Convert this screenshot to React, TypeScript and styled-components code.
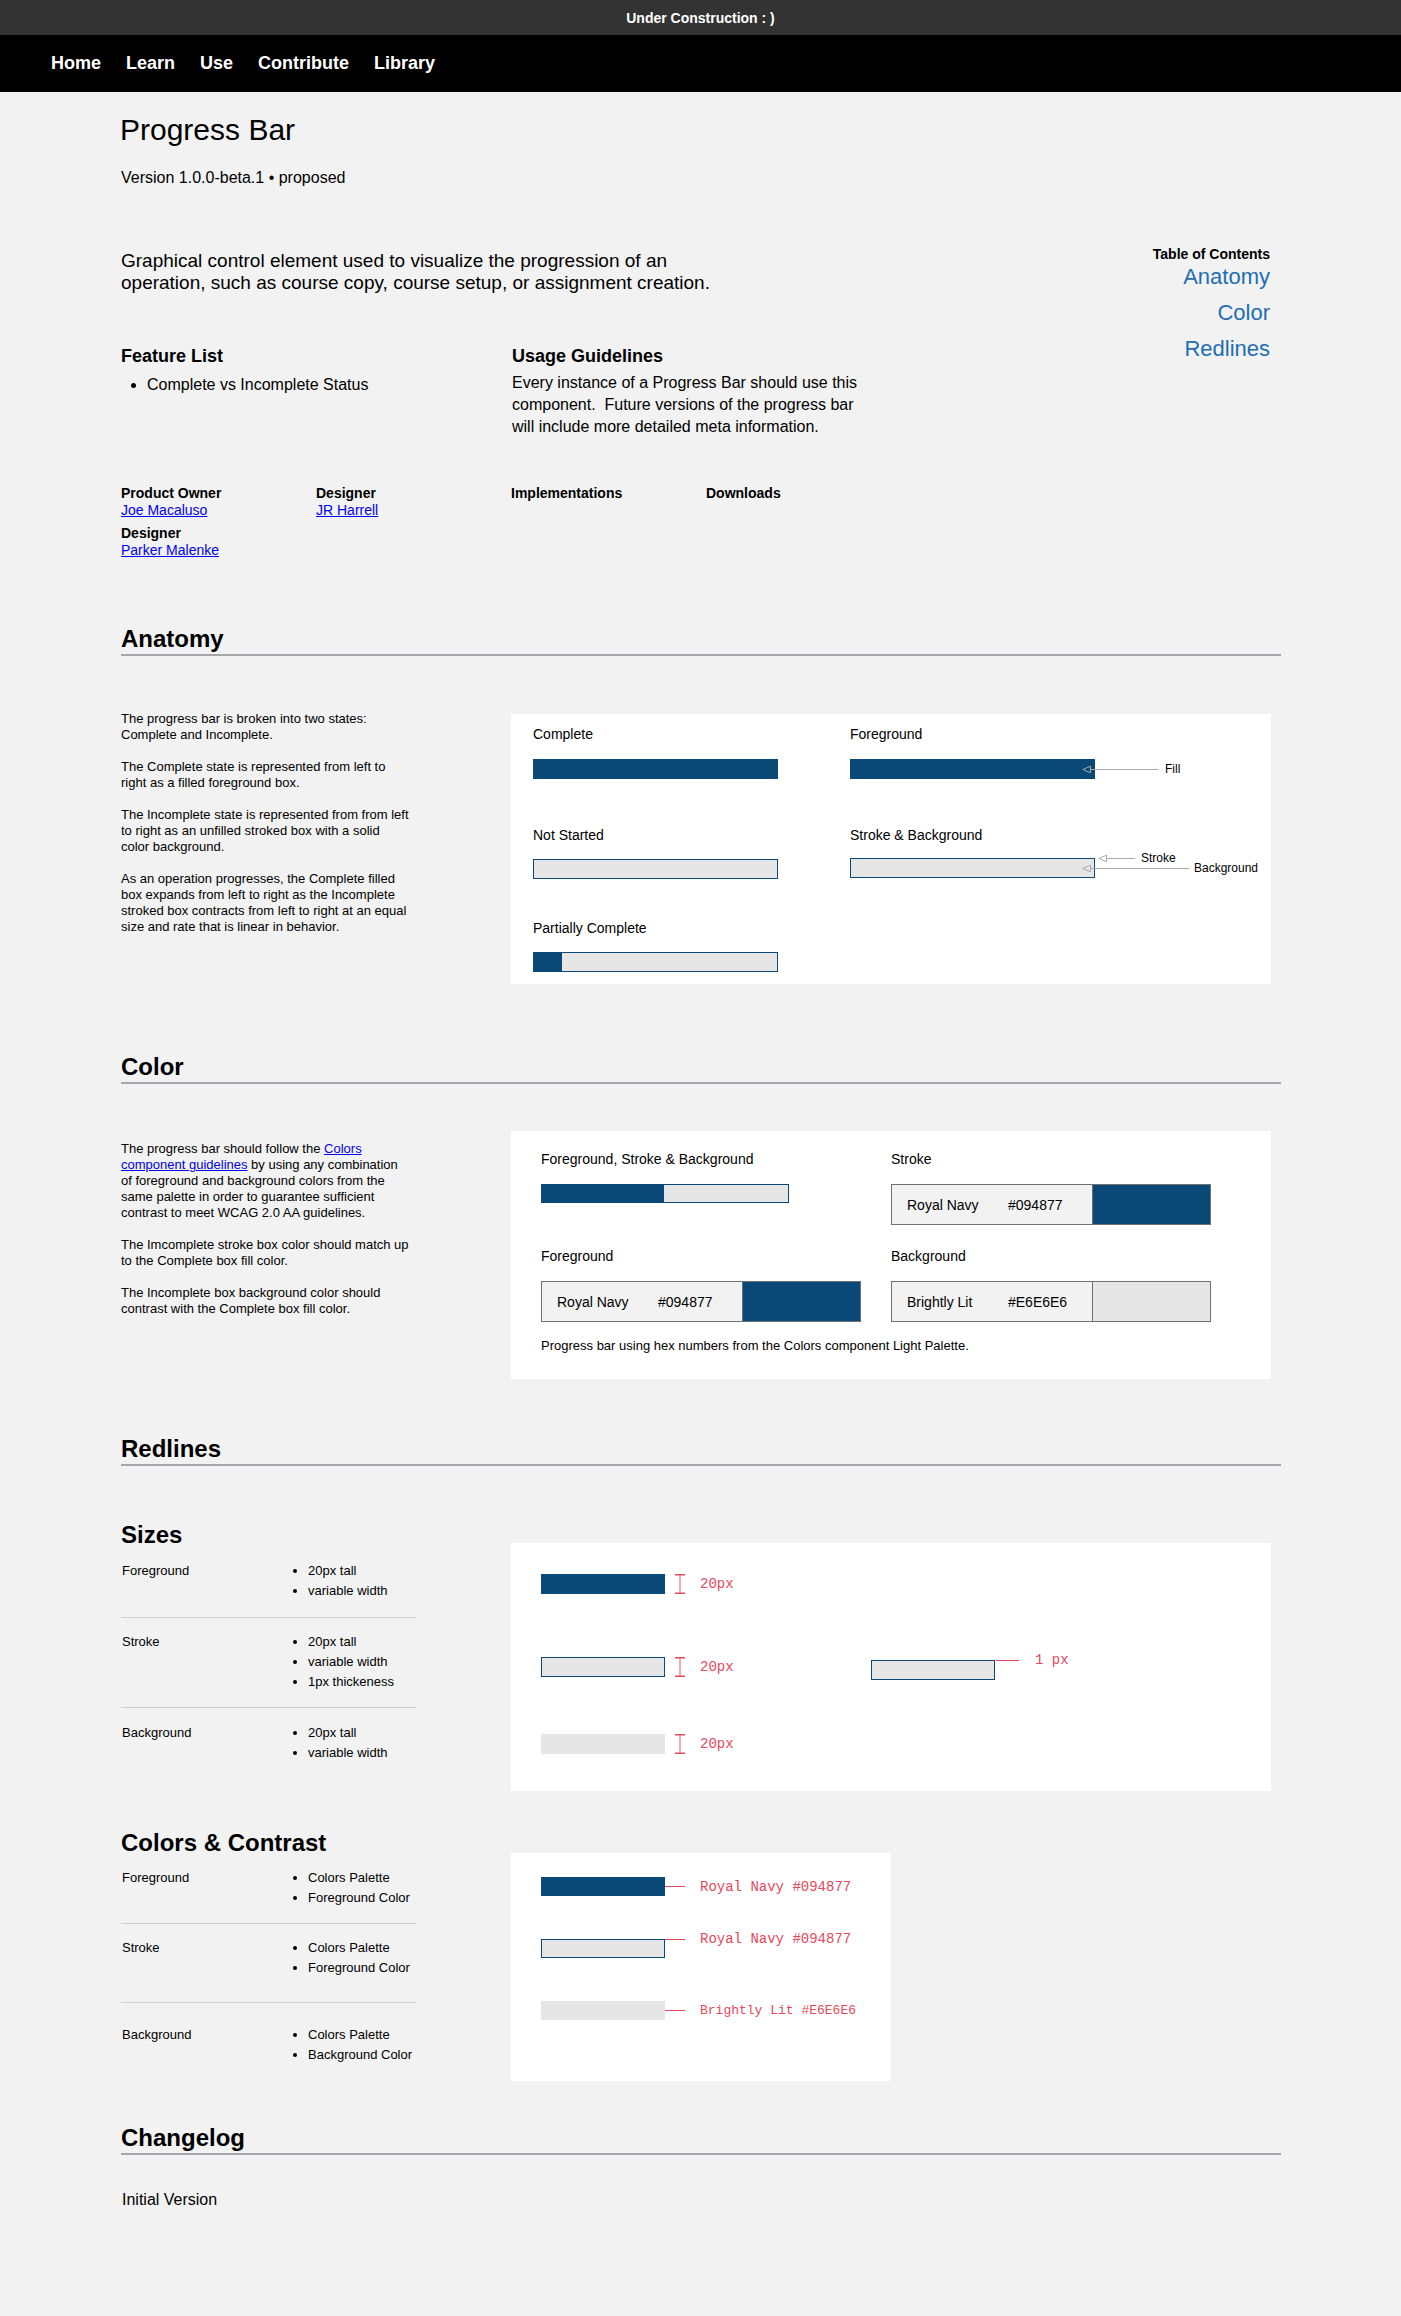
import styled, { createGlobalStyle } from "styled-components";

const NAVY = "#094877";
const LIT = "#e6e6e6";
const RED = "#e5485a";
const MONO = `"Liberation Mono", "Courier New", monospace`;

const GlobalStyle = createGlobalStyle`
  * {
    box-sizing: border-box;
  }

  body {
    margin: 0;
    background: #f2f2f2;
    color: #000;
    font-family: "Liberation Sans", Arial, Helvetica, sans-serif;
  }
`;

type BarKind = "fill" | "stroke" | "plain";

const Banner = styled.div`
  display: flex;
  align-items: center;
  justify-content: center;
  height: 35px;
  background: #333;
  color: #fff;
  font-size: 14px;
  font-weight: 700;
`;

const Nav = styled.nav`
  display: flex;
  align-items: center;
  gap: 25px;
  height: 57px;
  padding-left: 51px;
  background: #000;
`;

const NavLink = styled.a`
  color: #fff;
  font-size: 18px;
  font-weight: 700;
  text-decoration: none;
`;

const Main = styled.main`
  width: 1160px;
  margin-left: 121px;
  padding-bottom: 100px;
`;

const Title = styled.h1`
  margin: 20px 0 0 -1px;
  font-size: 30px;
  font-weight: 400;
  line-height: 36px;
`;

const Version = styled.p`
  margin: 20px 0 0;
  font-size: 16px;
  line-height: 20px;
`;

const Intro = styled.div`
  display: flex;
  justify-content: space-between;
  margin-top: 62px;
`;

const IntroMain = styled.div`
  display: flex;
  flex-direction: column;
`;

const Description = styled.p`
  max-width: 680px;
  margin: 0;
  font-size: 19px;
  line-height: 22px;
`;

const InfoGrid = styled.div`
  display: grid;
  grid-template-columns: 391px 360px;
  margin-top: 52px;
`;

const InfoHeading = styled.h3`
  margin: 0;
  font-size: 18px;
  font-weight: 700;
  line-height: 20px;
`;

const FeatureList = styled.ul`
  margin: 8px 0 0;
  padding-left: 26px;
  font-size: 16px;
  line-height: 22px;
`;

const InfoText = styled.p`
  margin: 6px 0 0;
  font-size: 16px;
  line-height: 22px;
`;

const MetaGrid = styled.div`
  display: grid;
  grid-template-columns: repeat(4, 195px);
  row-gap: 6px;
  margin-top: 47px;
  font-size: 14px;
  line-height: 17px;
`;

const MetaCell = styled.div`
  display: flex;
  flex-direction: column;
  min-height: 34px;
`;

const MetaLabel = styled.span`
  font-weight: 700;
`;

const PersonLink = styled.a`
  color: #0000ee;
  text-decoration: underline;
`;

const Toc = styled.aside`
  display: flex;
  flex-direction: column;
  align-items: flex-end;
  margin: -4px 11px 0 0;
`;

const TocTitle = styled.span`
  margin-bottom: -3px;
  font-size: 14px;
  font-weight: 700;
  line-height: 16px;
`;

const TocLink = styled.a`
  color: #1f6eb3;
  font-size: 22px;
  line-height: 36px;
  text-decoration: none;
`;

const SectionHeading = styled.h2<{ $top: number }>`
  margin: ${({ $top }) => $top}px 0 0;
  padding-bottom: 1px;
  border-bottom: 2px solid #a6a6ab;
  font-size: 24px;
  font-weight: 700;
  line-height: 28px;
`;

const SectionBody = styled.div<{ $top: number }>`
  display: grid;
  grid-template-columns: 390px 760px;
  align-items: start;
  margin-top: ${({ $top }) => $top}px;
`;

const Notes = styled.div<{ $offset: number }>`
  width: 300px;
  margin-top: ${({ $offset }) => $offset}px;
  font-size: 13px;
  line-height: 16px;

  p {
    margin: 0 0 16px;
  }
`;

const InlineLink = styled.a`
  color: #0000ee;
  text-decoration: underline;
`;

const Panel = styled.div`
  display: grid;
  align-content: start;
  align-items: start;
  background: #fff;
`;

const AnatomyPanel = styled(Panel)`
  grid-template-columns: 317px 1fr;
  grid-template-rows: 101px 93px auto;
  height: 270px;
  padding: 12px 22px 0;
`;

const ColorPanel = styled(Panel)`
  grid-template-columns: 350px 1fr;
  grid-template-rows: 97px auto;
  height: 248px;
  padding: 20px 30px 0;
`;

const Demo = styled.div<{ $gap?: number }>`
  display: flex;
  flex-direction: column;
  align-items: flex-start;
  gap: ${({ $gap }) => $gap ?? 17}px;
`;

const DemoLabel = styled.span`
  font-size: 14px;
  line-height: 16px;
`;

const Bar = styled.div<{ $w: number; $h?: number; $kind: BarKind }>`
  position: relative;
  flex-shrink: 0;
  width: ${({ $w }) => $w}px;
  height: ${({ $h }) => $h ?? 20}px;
  background: ${({ $kind }) => ($kind === "fill" ? NAVY : LIT)};
  border: ${({ $kind }) => ($kind === "stroke" ? `1px solid ${NAVY}` : "none")};
`;

const BarFill = styled.div<{ $w: number }>`
  width: ${({ $w }) => $w}px;
  height: 100%;
  background: ${NAVY};
`;

const Callout = styled.div<{ $x: number; $y: number; $gap: number }>`
  position: absolute;
  left: ${({ $x }) => $x}px;
  top: ${({ $y }) => $y}px;
  display: flex;
  align-items: center;
  gap: ${({ $gap }) => $gap}px;
  transform: translateY(-50%);
  font-size: 12px;
  line-height: 14px;
  white-space: nowrap;
`;

const SwatchBox = styled.div`
  display: flex;
  width: 320px;
  height: 41px;
  border: 1px solid #707070;
`;

const SwatchInfo = styled.div`
  display: flex;
  flex: 0 0 201px;
  align-items: center;
  padding-left: 15px;
  border-right: 1px solid #707070;
  background: #f2f2f2;
  font-size: 14px;
`;

const SwatchName = styled.span`
  width: 101px;
`;

const SwatchChip = styled.div<{ $color: string }>`
  flex: 1;
  background: ${({ $color }) => $color};
`;

const Caption = styled.p`
  grid-column: 1 / -1;
  margin: 16px 0 0;
  font-size: 13px;
  line-height: 16px;
`;

const SubTitle = styled.h3`
  margin: 0;
  font-size: 24px;
  font-weight: 700;
  line-height: 28px;
`;

const SpecTable = styled.div<{ $top: number }>`
  width: 295px;
  margin-top: ${({ $top }) => $top}px;
`;

const SpecRow = styled.div<{ $pt: number; $pb: number }>`
  display: grid;
  grid-template-columns: 176px 1fr;
  padding: ${({ $pt, $pb }) => `${$pt}px 0 ${$pb}px`};
  border-bottom: 1px solid #cfcfcf;
  font-size: 13px;
  line-height: 20px;

  &:last-child {
    border-bottom: none;
  }
`;

const SpecName = styled.span`
  padding-left: 1px;
`;

const SpecList = styled.ul`
  margin: 0;
  padding-left: 11px;
`;

const SizesPanel = styled(Panel)`
  grid-template-rows: 83px 77px auto;
  height: 248px;
  margin-top: 22px;
  padding: 31px 30px 0;
`;

const ContrastPanel = styled(Panel)`
  grid-template-rows: 62px 62px auto;
  width: 380px;
  height: 228px;
  margin-top: 24px;
  padding: 24px 30px 0;
`;

const MeasureRow = styled.div<{ $align?: string }>`
  display: flex;
  align-items: ${({ $align }) => $align ?? "center"};
`;

const MeasureGroup = styled.div`
  display: flex;
  align-items: center;
  width: 330px;
`;

const IBeam = styled.svg`
  flex-shrink: 0;
  margin-left: 10px;
`;

const RedText = styled.span<{ $size?: number; $top?: number; $left?: number }>`
  margin: ${({ $top, $left }) => `${$top ?? 0}px 0 0 ${$left ?? 15}px`};
  color: ${RED};
  font-family: ${MONO};
  font-size: ${({ $size }) => $size ?? 14}px;
  line-height: 16px;
  white-space: pre;
`;

const Leader = styled.div<{ $w: number; $shift: number }>`
  flex-shrink: 0;
  width: ${({ $w }) => $w}px;
  height: 1px;
  margin-left: ${({ $shift }) => $shift}px;
  background: ${RED};
`;

const ThicknessDemo = styled.div`
  display: flex;
  align-items: flex-start;
  margin-top: 3px;
`;

const Changelog = styled.p`
  margin: 35px 0 0 1px;
  font-size: 16px;
  line-height: 20px;
`;

function Pointer({ length }: { length: number }) {
  return (
    <svg width={length} height={9} viewBox={`0 0 ${length} 9`}>
      <line x1="8.5" y1="4.5" x2={length} y2="4.5" stroke="#a9a9a9" />
      <polygon points="0.8,4.5 8.5,1.2 8.5,7.8" fill="none" stroke="#a9a9a9" />
    </svg>
  );
}

function HeightMark() {
  return (
    <IBeam width="10" height="20" viewBox="0 0 10 20">
      <line x1="5" y1="1" x2="5" y2="19" stroke="#ef8f9a" strokeWidth="1.5" />
      <line x1="0" y1="0.75" x2="10" y2="0.75" stroke={RED} strokeWidth="1.5" />
      <line x1="0" y1="19.25" x2="10" y2="19.25" stroke={RED} strokeWidth="1.5" />
    </IBeam>
  );
}

function Swatch({ name, hex, color }: { name: string; hex: string; color: string }) {
  return (
    <SwatchBox>
      <SwatchInfo>
        <SwatchName>{name}</SwatchName>
        <span>{hex}</span>
      </SwatchInfo>
      <SwatchChip $color={color} />
    </SwatchBox>
  );
}

const navItems = ["Home", "Learn", "Use", "Contribute", "Library"];

const sizeSpecs = [
  { name: "Foreground", items: ["20px tall", "variable width"], pt: 0, pb: 16 },
  { name: "Stroke", items: ["20px tall", "variable width", "1px thickeness"], pt: 14, pb: 15 },
  { name: "Background", items: ["20px tall", "variable width"], pt: 15, pb: 0 },
];

const contrastSpecs = [
  { name: "Foreground", items: ["Colors Palette", "Foreground Color"], pt: 0, pb: 15 },
  { name: "Stroke", items: ["Colors Palette", "Foreground Color"], pt: 14, pb: 24 },
  { name: "Background", items: ["Colors Palette", "Background Color"], pt: 22, pb: 0 },
];

export default function App() {
  return (
    <>
      <GlobalStyle />
      <Banner>Under Construction : )</Banner>
      <Nav>
        {navItems.map((item) => (
          <NavLink key={item} href="#">
            {item}
          </NavLink>
        ))}
      </Nav>

      <Main>
        <Title>Progress Bar</Title>
        <Version>Version 1.0.0-beta.1 • proposed</Version>

        <Intro>
          <IntroMain>
            <Description>
              Graphical control element used to visualize the progression of an
              <br />
              operation, such as course copy, course setup, or assignment creation.
            </Description>
            <InfoGrid>
              <div>
                <InfoHeading>Feature List</InfoHeading>
                <FeatureList>
                  <li>Complete vs Incomplete Status</li>
                </FeatureList>
              </div>
              <div>
                <InfoHeading>Usage Guidelines</InfoHeading>
                <InfoText>
                  Every instance of a Progress Bar should use this
                  <br />
                  component.&nbsp; Future versions of the progress bar
                  <br />
                  will include more detailed meta information.
                </InfoText>
              </div>
            </InfoGrid>
            <MetaGrid>
              <MetaCell>
                <MetaLabel>Product Owner</MetaLabel>
                <PersonLink href="#">Joe Macaluso</PersonLink>
              </MetaCell>
              <MetaCell>
                <MetaLabel>Designer</MetaLabel>
                <PersonLink href="#">JR Harrell</PersonLink>
              </MetaCell>
              <MetaCell>
                <MetaLabel>Implementations</MetaLabel>
              </MetaCell>
              <MetaCell>
                <MetaLabel>Downloads</MetaLabel>
              </MetaCell>
              <MetaCell>
                <MetaLabel>Designer</MetaLabel>
                <PersonLink href="#">Parker Malenke</PersonLink>
              </MetaCell>
            </MetaGrid>
          </IntroMain>

          <Toc>
            <TocTitle>Table of Contents</TocTitle>
            <TocLink href="#anatomy">Anatomy</TocLink>
            <TocLink href="#color">Color</TocLink>
            <TocLink href="#redlines">Redlines</TocLink>
          </Toc>
        </Intro>

        <SectionHeading id="anatomy" $top={66}>
          Anatomy
        </SectionHeading>
        <SectionBody $top={58}>
          <Notes $offset={-3}>
            <p>
              The progress bar is broken into two states:
              <br />
              Complete and Incomplete.
            </p>
            <p>
              The Complete state is represented from left to
              <br />
              right as a filled foreground box.
            </p>
            <p>
              The Incomplete state is represented from from left
              <br />
              to right as an unfilled stroked box with a solid
              <br />
              color background.
            </p>
            <p>
              As an operation progresses, the Complete filled
              <br />
              box expands from left to right as the Incomplete
              <br />
              stroked box contracts from left to right at an equal
              <br />
              size and rate that is linear in behavior.
            </p>
          </Notes>

          <AnatomyPanel>
            <Demo>
              <DemoLabel>Complete</DemoLabel>
              <Bar $w={245} $kind="fill" />
            </Demo>
            <Demo>
              <DemoLabel>Foreground</DemoLabel>
              <Bar $w={245} $kind="fill">
                <Callout $x={232} $y={10} $gap={7}>
                  <Pointer length={76} />
                  Fill
                </Callout>
              </Bar>
            </Demo>
            <Demo $gap={16}>
              <DemoLabel>Not Started</DemoLabel>
              <Bar $w={245} $kind="stroke" />
            </Demo>
            <Demo $gap={15}>
              <DemoLabel>Stroke &amp; Background</DemoLabel>
              <Bar $w={245} $kind="stroke">
                <Callout $x={247} $y={-1} $gap={6}>
                  <Pointer length={37} />
                  Stroke
                </Callout>
                <Callout $x={231} $y={9} $gap={5}>
                  <Pointer length={107} />
                  Background
                </Callout>
              </Bar>
            </Demo>
            <Demo $gap={16}>
              <DemoLabel>Partially Complete</DemoLabel>
              <Bar $w={245} $kind="stroke">
                <BarFill $w={28} />
              </Bar>
            </Demo>
          </AnatomyPanel>
        </SectionBody>

        <SectionHeading id="color" $top={69}>
          Color
        </SectionHeading>
        <SectionBody $top={47}>
          <Notes $offset={10}>
            <p>
              The progress bar should follow the{" "}
              <InlineLink href="#">
                Colors
                <br />
                component guidelines
              </InlineLink>{" "}
              by using any combination
              <br />
              of foreground and background colors from the
              <br />
              same palette in order to guarantee sufficient
              <br />
              contrast to meet WCAG 2.0 AA guidelines.
            </p>
            <p>
              The Imcomplete stroke box color should match up
              <br />
              to the Complete box fill color.
            </p>
            <p>
              The Incomplete box background color should
              <br />
              contrast with the Complete box fill color.
            </p>
          </Notes>

          <ColorPanel>
            <Demo>
              <DemoLabel>Foreground, Stroke &amp; Background</DemoLabel>
              <Bar $w={248} $h={19} $kind="stroke">
                <BarFill $w={122} />
              </Bar>
            </Demo>
            <Demo>
              <DemoLabel>Stroke</DemoLabel>
              <Swatch name="Royal Navy" hex="#094877" color={NAVY} />
            </Demo>
            <Demo>
              <DemoLabel>Foreground</DemoLabel>
              <Swatch name="Royal Navy" hex="#094877" color={NAVY} />
            </Demo>
            <Demo>
              <DemoLabel>Background</DemoLabel>
              <Swatch name="Brightly Lit" hex="#E6E6E6" color={LIT} />
            </Demo>
            <Caption>Progress bar using hex numbers from the Colors component Light Palette.</Caption>
          </ColorPanel>
        </SectionBody>

        <SectionHeading id="redlines" $top={56}>
          Redlines
        </SectionHeading>
        <SectionBody $top={55}>
          <div>
            <SubTitle>Sizes</SubTitle>
            <SpecTable $top={12}>
              {sizeSpecs.map((spec) => (
                <SpecRow key={spec.name} $pt={spec.pt} $pb={spec.pb}>
                  <SpecName>{spec.name}</SpecName>
                  <SpecList>
                    {spec.items.map((item) => (
                      <li key={item}>{item}</li>
                    ))}
                  </SpecList>
                </SpecRow>
              ))}
            </SpecTable>
          </div>

          <SizesPanel>
            <MeasureRow>
              <Bar $w={124} $kind="fill" />
              <HeightMark />
              <RedText>20px</RedText>
            </MeasureRow>
            <MeasureRow $align="flex-start">
              <MeasureGroup>
                <Bar $w={124} $kind="stroke" />
                <HeightMark />
                <RedText>20px</RedText>
              </MeasureGroup>
              <ThicknessDemo>
                <Bar $w={124} $kind="stroke" />
                <Leader $w={23} $shift={1} />
                <RedText $top={-8} $left={16}>
                  1 px
                </RedText>
              </ThicknessDemo>
            </MeasureRow>
            <MeasureRow>
              <Bar $w={124} $kind="plain" />
              <HeightMark />
              <RedText>20px</RedText>
            </MeasureRow>
          </SizesPanel>
        </SectionBody>

        <SectionBody $top={38}>
          <div>
            <SubTitle>Colors &amp; Contrast</SubTitle>
            <SpecTable $top={11}>
              {contrastSpecs.map((spec) => (
                <SpecRow key={spec.name} $pt={spec.pt} $pb={spec.pb}>
                  <SpecName>{spec.name}</SpecName>
                  <SpecList>
                    {spec.items.map((item) => (
                      <li key={item}>{item}</li>
                    ))}
                  </SpecList>
                </SpecRow>
              ))}
            </SpecTable>
          </div>

          <ContrastPanel>
            <MeasureRow>
              <Bar $w={124} $h={19} $kind="fill" />
              <Leader $w={23} $shift={-3} />
              <RedText>Royal Navy #094877</RedText>
            </MeasureRow>
            <MeasureRow $align="flex-start">
              <Bar $w={124} $h={19} $kind="stroke" />
              <Leader $w={20} $shift={0} />
              <RedText $top={-8}>Royal Navy #094877</RedText>
            </MeasureRow>
            <MeasureRow>
              <Bar $w={124} $h={19} $kind="plain" />
              <Leader $w={28} $shift={-8} />
              <RedText $size={13}>Brightly Lit #E6E6E6</RedText>
            </MeasureRow>
          </ContrastPanel>
        </SectionBody>

        <SectionHeading $top={43}>Changelog</SectionHeading>
        <Changelog>Initial Version</Changelog>
      </Main>
    </>
  );
}
